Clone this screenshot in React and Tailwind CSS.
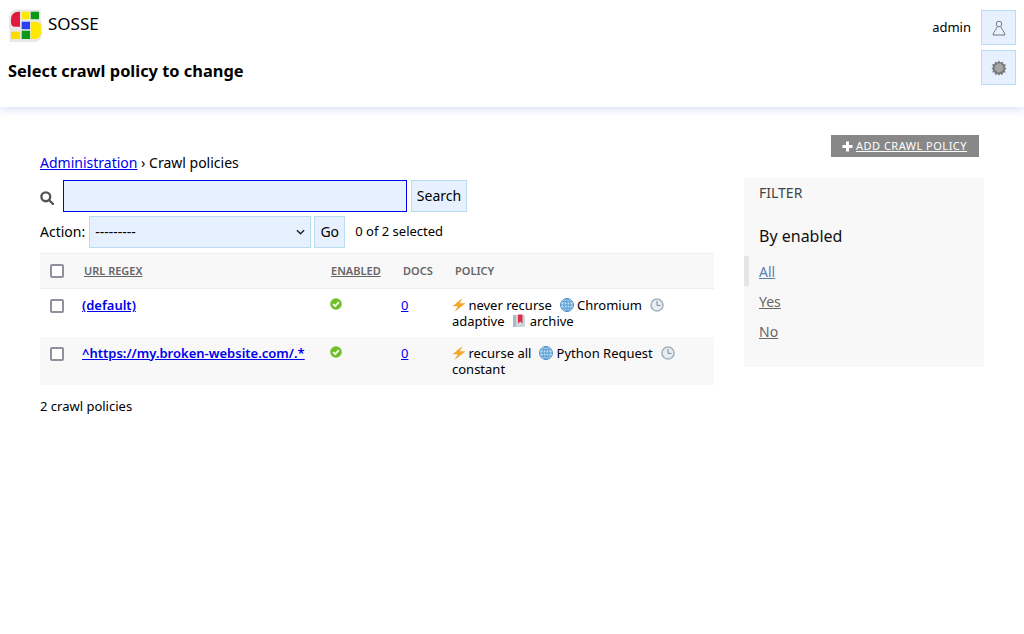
const Bolt = () => (
  <svg viewBox="0 0 14 14" className="inline-block w-[14px] h-[14px] align-[-2px] -mr-[1px]">
    <path d="M10.5 0 L0.5 8.2 L5.8 8.2 L2.5 14 L13.5 5.2 L7.8 5.2 Z" fill="#f4a62a" />
  </svg>
);

const Globe = () => (
  <svg viewBox="0 0 14 14" className="inline-block w-[14px] h-[14px] align-[-2px] ml-[1px]" fill="none">
    <circle cx="7" cy="7" r="6.5" fill="#bcdcf4" stroke="#4f93c9" />
    <ellipse cx="7" cy="7" rx="3" ry="6.5" stroke="#4f93c9" strokeWidth="0.9" />
    <path d="M0.8 7 H13.2 M1.7 3.8 H12.3 M1.7 10.2 H12.3 M7 0.5 V13.5" stroke="#4f93c9" strokeWidth="0.9" />
  </svg>
);

const Clock = () => (
  <svg viewBox="0 0 14 14" className="inline-block w-[14px] h-[14px] align-[-2px] ml-[1px]" fill="none">
    <circle cx="7" cy="7" r="6" fill="#e8edf2" stroke="#a3b4c3" strokeWidth="1.6" />
    <path d="M7 3 V7.4 H10.5" stroke="#7b8790" strokeWidth="1" />
  </svg>
);

const Book = () => (
  <svg viewBox="0 0 14 14" className="inline-block w-[14px] h-[14px] align-[-2px] ml-[1px]">
    <rect x="1" y="1" width="12" height="12" rx="1.5" fill="#ccd6dd" />
    <rect x="1" y="1" width="3" height="12" fill="#a9bac8" />
    <path d="M6 0.5 H10.5 V9.5 L8.25 7.5 L6 9.5 Z" fill="#dd2e44" />
  </svg>
);

const Check = () => (
  <svg viewBox="0 0 12 12" className="w-[12px] h-[12px]">
    <circle cx="6" cy="6" r="5.8" fill="#70bf2b" />
    <path d="M3.1 6.1 L5.2 8.1 L8.9 4.2" fill="none" stroke="#fff" strokeWidth="1.7" />
  </svg>
);

const Logo = () => (
  <svg viewBox="0 0 34 34" className="w-[34px] h-[34px]">
    <path d="M11 1.5 H32.5 V12 A6 6 0 0 1 34 16 V26 A8 8 0 0 1 26 34 H1.5 V20 A7 7 0 0 1 1 16 V9 A8 8 0 0 1 11 1.5 Z" fill="#e8e8e8" />
    <path d="M12 3.7 H10 A7 7 0 0 0 3 10.7 V15 A4 4 0 0 0 7 18.7 H12 Z" fill="#e2193f" />
    <rect x="13.7" y="3.7" width="7.5" height="7.5" fill="#ffe800" />
    <rect x="22.7" y="3.7" width="8.3" height="7.5" fill="#0a9a18" />
    <rect x="13.7" y="13.7" width="8.3" height="7.5" fill="#2b3ff0" />
    <path d="M22.7 13.7 H28 A5 5 0 0 1 33 18.7 V25 A6 6 0 0 1 27 31 H22.7 Z" fill="#ffe800" />
    <rect x="3" y="23.7" width="9" height="7.3" fill="#ffdc00" />
    <rect x="13.7" y="22.7" width="8.3" height="8.3" fill="#0a9a18" />
  </svg>
);

const policies = [
  { regex: "(default)", recurse: "never recurse", browser: "Chromium", freq: "adaptive", archive: true, even: false },
  { regex: "^https://my.broken-website.com/.*", recurse: "recurse all", browser: "Python Request", freq: "constant", archive: false, even: true },
];

function App() {
  return (
    <div className="min-h-screen bg-white text-[13px] text-black font-['Noto_Sans',sans-serif]">
      {/* Header */}
      <header className="h-[107px] flex justify-between pl-2 pr-2 shadow-[0_3px_8px_#dfe3f5]">
        <div>
          <div className="flex items-center gap-[6px] pt-2 h-[42px]">
            <Logo />
            <span className="text-[17px] -translate-y-[1px]">SOSSE</span>
          </div>
          <h1 className="mt-[17px] text-[16.4px] font-bold leading-[24px]">Select crawl policy to change</h1>
        </div>
        <div className="flex gap-[10px] pt-[10px]">
          <span className="mt-[8px] leading-[18px]">admin</span>
          <div className="flex flex-col gap-[5px]">
            <button className="w-[35px] h-[35px] flex items-center justify-center bg-[#e6f0fe] border border-[#b8dcf0]">
              <svg viewBox="0 0 14 16" className="w-[14px] h-[16px]" fill="none" stroke="#777">
                <circle cx="7" cy="4" r="2.8" />
                <path d="M5 7 C4.5 9 1.5 12 1 15 H13 C12.5 12 9.5 9 9 7" />
              </svg>
            </button>
            <button className="w-[35px] h-[35px] flex items-center justify-center bg-[#e6f0fe] border border-[#b8dcf0]">
              <svg viewBox="0 0 16 16" className="w-[16px] h-[16px]">
                <path d="M8 0.5 L9.5 2.6 L12 1.8 L12.4 4.1 L15 4.5 L13.8 7 L15.5 8.5 L13.8 10 L14.6 12.4 L12.2 12.6 L11.6 15 L9.4 14 L8 15.5 L6.4 14 L4.2 15 L3.7 12.6 L1.3 12.3 L2.2 10 L0.5 8.5 L2.2 7 L1 4.5 L3.6 4.1 L4 1.8 L6.5 2.6 Z" fill="#7a7a7a" />
                <circle cx="8" cy="8" r="4.4" fill="#a5a5a5" />
              </svg>
            </button>
          </div>
        </div>
      </header>

      {/* Content */}
      <main className="flex gap-[30px] pl-[40px] pr-[40px]">
        <section className="w-[674px] pt-[46px]">
          <div className="leading-[20px] text-[14px]">
            <a href="#" className="text-[#0000ee] underline">Administration</a> › Crawl policies
          </div>
          <div className="flex items-center mt-[7px] h-[32px]">
            <svg viewBox="0 0 14 14" className="w-[14px] h-[14px] mt-[4px]" fill="none" stroke="#555" strokeWidth="2.4">
              <circle cx="5.8" cy="5.8" r="4.4" />
              <path d="M9 9 L13 13" strokeLinecap="round" />
            </svg>
            <input className="ml-[9px] w-[344px] h-[32px] bg-[#e6f0fe] border border-[#0000ee]" />
            <button className="ml-[4px] w-[56px] h-[32px] pb-[2px] text-[14px] bg-[#e6f0fe] border border-[#b8dcf0]">Search</button>
          </div>
          <div className="flex items-center mt-[4px] h-[32px] text-[14px]">
            <span className="pb-[2px]">Action:</span>
            <div className="relative ml-[4px] w-[222px] h-[32px] pb-[2px] bg-[#e6f0fe] border border-[#b8dcf0] flex items-center pl-[5px]">
              ---------
              <svg viewBox="0 0 10 6" className="absolute right-[5px] top-[12px] w-[9px] h-[6px]" fill="none" stroke="#222" strokeWidth="1.6">
                <path d="M1 1 L5 5 L9 1" />
              </svg>
            </div>
            <button className="ml-[3px] w-[31px] h-[32px] pb-[2px] bg-[#e6f0fe] border border-[#b8dcf0]">Go</button>
            <span className="ml-[10px] text-[13px]">0 of 2 selected</span>
          </div>

          <table className="mt-[5px] w-full table-fixed border-collapse">
            <thead>
              <tr className="h-[35px] bg-[#f8f8f8] border-y border-[#eeeeee] text-[11px] font-semibold text-[#666] text-left">
                <th className="w-[34px] pl-[10px]"><span className="block w-[14px] h-[14px] rounded-[2px] border-2 border-[#8f8f9d] bg-white" /></th>
                <th className="w-[247px] pl-[10px] font-semibold"><span className="underline">URL REGEX</span></th>
                <th className="w-[72px] pl-[10px] font-semibold"><span className="underline">ENABLED</span></th>
                <th className="w-[52px] pl-[10px] font-semibold">DOCS</th>
                <th className="pl-[10px] font-semibold">POLICY</th>
              </tr>
            </thead>
            <tbody>
              {policies.map((p) => (
                <tr key={p.regex} className={`h-[48px] align-top leading-[16px] ${p.even ? "bg-[#f8f8f8]" : ""}`}>
                  <td className="pl-[10px] pt-[10px]"><span className="block w-[14px] h-[14px] rounded-[2px] border-2 border-[#8f8f9d] bg-white" /></td>
                  <td className="pl-[8px] pt-[8px] font-semibold"><a href="#" className="text-[#0000ee] underline">{p.regex}</a></td>
                  <td className="pl-[9px] pt-[9px]"><Check /></td>
                  <td className="pl-[8px] pt-[8px]"><a href="#" className="text-[#0000ee] underline">0</a></td>
                  <td className="pl-[7px] pt-[8px] pr-[20px]">
                    <Bolt /> {p.recurse} &nbsp;<Globe /> {p.browser} &nbsp;<Clock /> {p.freq}
                    {p.archive && <> &nbsp;<Book /> archive</>}
                  </td>
                </tr>
              ))}
            </tbody>
          </table>
          <p className="mt-[12px] leading-[18px]">2 crawl policies</p>
        </section>

        {/* Sidebar */}
        <aside className="w-[240px] pt-[28px]">
          <div className="flex justify-end pr-[5px]">
            <a href="#" className="h-[22px] w-[148px] flex items-center justify-center gap-[3px] pr-[1px] bg-[#888] text-white text-[11px] tracking-[0.5px]">
              <svg viewBox="0 0 11 11" className="w-[11px] h-[11px]" fill="#fff"><path d="M4 0.5 H7 V4 H10.5 V7 H7 V10.5 H4 V7 H0.5 V4 H4 Z" /></svg>
              <span className="underline">ADD CRAWL POLICY</span>
            </a>
          </div>
          <div className="mt-[21px] h-[189px] bg-[#f8f8f8] pt-[5px]">
            <h2 className="pl-[15px] text-[14px] leading-[20px] text-[#444]">FILTER</h2>
            <h3 className="pl-[15px] mt-[22px] text-[16px] leading-[22px] text-[#111]">By enabled</h3>
            <ul className="mt-[9px] text-[14px]">
              <li className="h-[30px] flex items-center pl-[10px] border-l-[5px] border-[#e6e6e6]"><a href="#" className="text-[#5b80b2] underline">All</a></li>
              <li className="h-[30px] flex items-center pl-[15px]"><a href="#" className="text-[#666] underline">Yes</a></li>
              <li className="h-[30px] flex items-center pl-[15px]"><a href="#" className="text-[#666] underline">No</a></li>
            </ul>
          </div>
        </aside>
      </main>
    </div>
  );
}

export default App;
